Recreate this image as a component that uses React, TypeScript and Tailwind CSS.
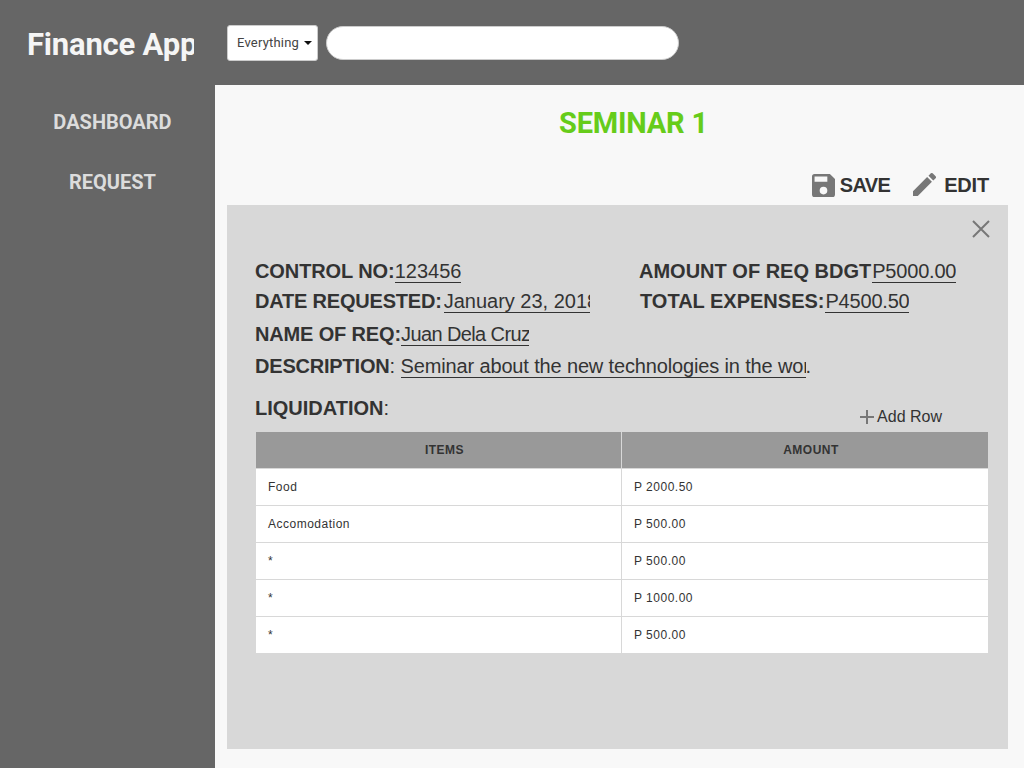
import React from "react";

const rows = [
  { item: "Food", amount: "P 2000.50" },
  { item: "Accomodation", amount: "P 500.00" },
  { item: "*", amount: "P 500.00" },
  { item: "*", amount: "P 1000.00" },
  { item: "*", amount: "P 500.00" },
];

function Value({ children, className }: { children: React.ReactNode; className: string }) {
  return (
    <span
      className={`inline-block overflow-hidden whitespace-nowrap border-b border-[#333] font-normal leading-[22px] align-top ${className}`}
    >
      {children}
    </span>
  );
}

export default function App() {
  return (
    <div className="flex h-[768px] w-[1024px] flex-col overflow-hidden bg-[#666666] font-['Liberation_Sans',Arial,sans-serif] text-[#333333]">
      {/* Top bar */}
      <header className="flex h-[85px] shrink-0 items-center">
        <div className="ml-[27px] mt-[5px] w-[167px] overflow-hidden whitespace-nowrap font-['Roboto',sans-serif] text-[31px] font-bold tracking-[-0.2px] text-[#f5f5f5]">
          Finance App
        </div>
        <button className="ml-[33px] mt-[1px] flex h-[36px] w-[91px] items-center rounded-[3px] border border-[#cccccc] bg-white pl-[9px] font-['Roboto',sans-serif] text-[13px] tracking-[0.2px] text-[#444444]">
          Everything
          <svg className="ml-[5px]" width="8" height="4" viewBox="0 0 8 4">
            <path d="M0 0h8L4 4z" fill="#111" />
          </svg>
        </button>
        <input
          className="ml-[8px] mt-[1px] h-[34px] w-[353px] rounded-full border border-[#cccccc] bg-white outline-none"
          aria-label="Search"
        />
      </header>

      <div className="flex min-h-0 flex-1">
        {/* Sidebar */}
        <nav className="flex w-[215px] shrink-0 flex-col items-center gap-[36px] pl-[10px] pt-[25px] font-['Roboto',sans-serif] text-[20px] font-bold leading-[24px] text-[#dcdcdc]">
          <a>DASHBOARD</a>
          <a>REQUEST</a>
        </nav>

        {/* Main */}
        <main className="flex flex-1 flex-col bg-[#f8f8f8] pl-[12px] pr-[16px]">
          <h1 className="pl-[32px] pt-[22px] text-center font-['Roboto',sans-serif] text-[29px] font-bold leading-[33px] tracking-[-0.2px] text-[#66cc1a]">
            SEMINAR 1
          </h1>

          <div className="mt-[18px] flex h-[47px] items-start justify-end pr-[19px] pt-[16px] text-[20px] font-bold leading-[23px]">
            <button className="flex items-center gap-[5px]">
              <svg className="-mt-[1px]" width="23" height="23" viewBox="3 3 18 18" fill="#777777">
                <path d="M17 3H5a2 2 0 0 0-2 2v14a2 2 0 0 0 2 2h14a2 2 0 0 0 2-2V7l-4-4zm-5 16a3 3 0 1 1 0-6 3 3 0 0 1 0 6zm3-10H5V5h10v4z" />
              </svg>
              <span className="tracking-[-0.6px]">SAVE</span>
            </button>
            <button className="ml-[23px] flex items-center gap-[8px]">
              <svg className="-mt-[3px]" width="23" height="23" viewBox="3 3 18 18" fill="#777777">
                <path d="M3 17.25V21h3.75L17.81 9.94l-3.75-3.75L3 17.25zM20.71 7.04a1 1 0 0 0 0-1.41l-2.34-2.34a1 1 0 0 0-1.41 0l-1.83 1.83 3.75 3.75 1.83-1.83z" />
              </svg>
              <span className="tracking-[-0.2px]">EDIT</span>
            </button>
          </div>

          {/* Request card */}
          <section className="relative h-[544px] bg-[#d8d8d8] pl-[28px] pr-[19px] pt-[55px] text-[20px] font-bold leading-[23px]">
            <svg className="absolute right-[17px] top-[14px]" width="20" height="20" viewBox="0 0 20 20" stroke="#777777" strokeWidth="2" fill="none">
              <path d="M2 2l16 16M18 2L2 18" />
            </svg>

            <div className="flex h-[30px]">
              <div className="w-[384px] whitespace-nowrap">
                <span className="tracking-[-0.1px]">CONTROL NO:</span>
                <Value className="w-[66px]">123456</Value>
              </div>
              <div className="whitespace-nowrap">
                AMOUNT OF REQ BDGT
                <Value className="ml-[1px] w-[84px] tracking-[-0.2px]">P5000.00</Value>
              </div>
            </div>
            <div className="flex h-[33px]">
              <div className="w-[385px] whitespace-nowrap">
                <span className="tracking-[-0.2px]">DATE REQUESTED:</span>
                <Value className="ml-[2px] w-[146px]">January 23, 2018</Value>
              </div>
              <div className="whitespace-nowrap">
                TOTAL EXPENSES:
                <Value className="ml-[1px] w-[84px] tracking-[-0.2px]">P4500.50</Value>
              </div>
            </div>
            <div className="h-[32px] whitespace-nowrap">
              <span className="tracking-[-0.15px]">NAME OF REQ:</span>
              <Value className="w-[128px] tracking-[-0.6px]">Juan Dela Cruz</Value>
            </div>
            <div className="h-[42px] whitespace-nowrap">
              <span className="tracking-[-0.2px]">DESCRIPTION</span>
              <span className="font-normal">: </span>
              <Value className="w-[405px] tracking-[-0.15px]">Seminar about the new technologies in the world</Value>
              <span className="font-normal">.</span>
            </div>

            <div className="flex h-[24px] items-start justify-between">
              <div>
                LIQUIDATION<span className="font-normal">:</span>
              </div>
              <button className="mr-[47px] mt-[11px] flex items-center gap-[2px] text-[16px] font-normal leading-[18px]">
                <svg width="16" height="16" viewBox="0 0 16 16" stroke="#777777" strokeWidth="2" fill="none">
                  <path d="M8 1v14M1 8h14" />
                </svg>
                Add Row
              </button>
            </div>

            <table className="mt-[10px] w-[734px] table-fixed border-collapse border border-[#d8d8d8] bg-white text-[12px] font-normal leading-[14px]">
              <thead>
                <tr className="h-[37px] border-b border-[#d8d8d8] bg-[#999999] text-[12px] tracking-[0.5px]">
                  <th className="w-[366px] border-r border-[#d8d8d8] pl-[12px] font-bold">ITEMS</th>
                  <th className="pl-[12px] font-bold">AMOUNT</th>
                </tr>
              </thead>
              <tbody>
                {rows.map((row, i) => (
                  <tr key={i} className="h-[37px] border-b border-[#d8d8d8] tracking-[0.5px]">
                    <td className="border-r border-[#d8d8d8] pl-[12px]">{row.item}</td>
                    <td className="pl-[12px]">{row.amount}</td>
                  </tr>
                ))}
              </tbody>
            </table>
          </section>
        </main>
      </div>
    </div>
  );
}
